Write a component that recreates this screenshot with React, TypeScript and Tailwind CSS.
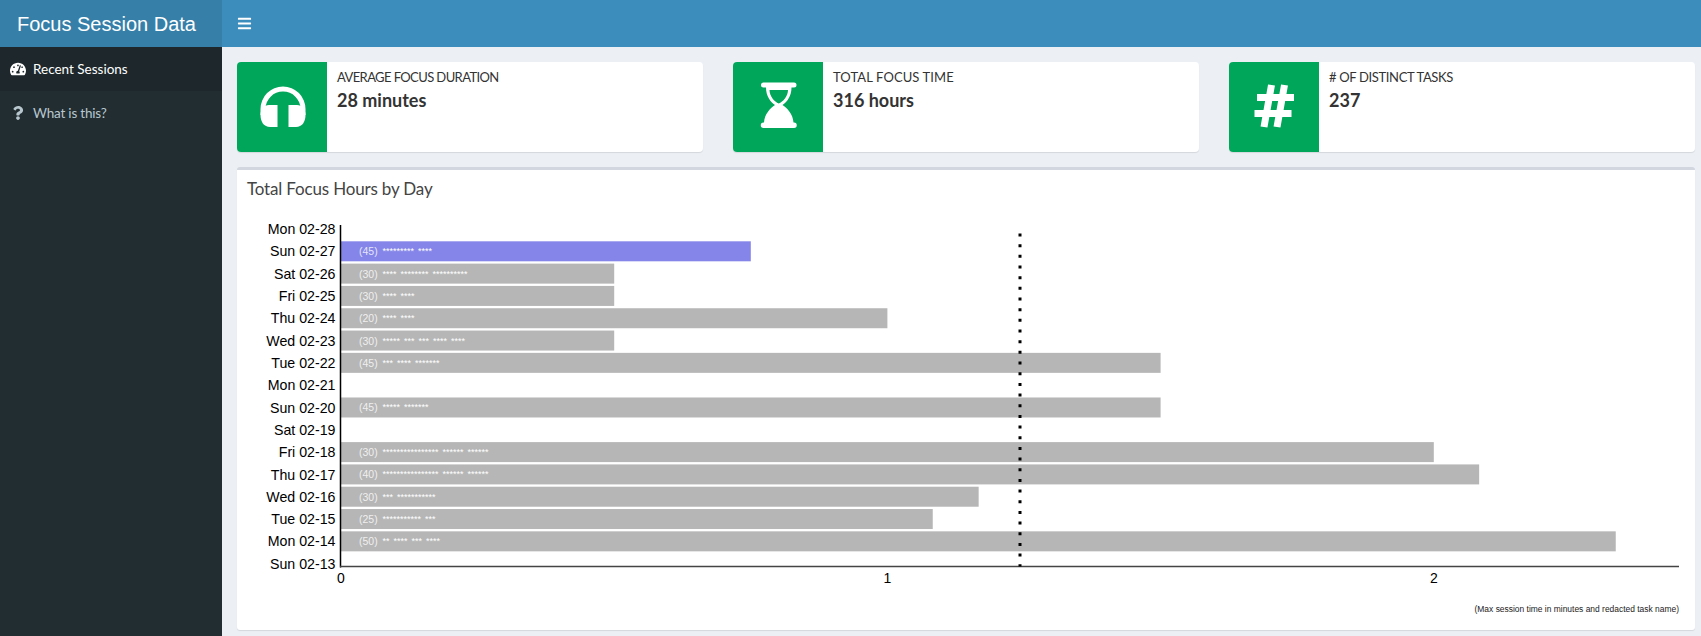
import React from 'react';
import { FaBars, FaQuestion, FaTachometerAlt } from 'react-icons/fa';

const HeadphonesIcon = () => (
  <svg viewBox="0 0 90 90" className="size-full" fill="white">
    <path d="M23.5 53V47A22.5 22.5 0 0 1 68.5 47V53H63.5V47A17.5 17.5 0 0 0 28.5 47V53Z" />
    <path d="M40.5 43V65H33C27 65 23.5 60 23.5 53C23.5 47 27 43 32 43Z" />
    <path d="M51.5 43V65H59C65 65 68.5 60 68.5 53C68.5 47 65 43 60 43Z" />
  </svg>
);

const HourglassIcon = () => (
  <svg viewBox="0 0 90 90" className="size-full" fill="white" fillRule="evenodd">
    <path d="M30.5 20.5H61a2.5 2.5 0 0 1 0 5H58.5C58.5 34 54 40 49.5 43C54 46 60 52 60.5 60.5H61a2.7 2.7 0 0 1 0 5.5H30.5a2.7 2.7 0 0 1 0-5.5H31C31.5 52 37.5 46 42 43C37.5 40 33 34 33 25.5H30.5a2.5 2.5 0 0 1 0-5ZM36.5 28H55C55 34 50 40 45.75 41.5C41.5 40 36.5 34 36.5 28Z" />
  </svg>
);

const HashIcon = () => (
  <svg viewBox="0 0 90 90" className="size-full" stroke="white" strokeWidth="7" fill="none">
    <path d="M42.5 23L35 65M55.5 23L48 65M28 35.5H65M25.5 51.5H62.5" />
  </svg>
);

const stats = [
  { label: 'Average Focus Duration', value: '28 minutes', icon: <HeadphonesIcon />, spacing: 'tracking-[-0.6px]' },
  { label: 'Total Focus Time', value: '316 hours', icon: <HourglassIcon />, spacing: 'tracking-[0.1px]' },
  { label: '# of Distinct Tasks', value: '237', icon: <HashIcon />, spacing: 'tracking-[-0.35px]' },
];

const days = [
  { day: 'Mon 02-28' },
  { day: 'Sun 02-27', hours: 0.75, max: 45, task: '********* ****' },
  { day: 'Sat 02-26', hours: 0.5, max: 30, task: '**** ******** **********' },
  { day: 'Fri 02-25', hours: 0.5, max: 30, task: '**** ****' },
  { day: 'Thu 02-24', hours: 1, max: 20, task: '**** ****' },
  { day: 'Wed 02-23', hours: 0.5, max: 30, task: '***** *** *** **** ****' },
  { day: 'Tue 02-22', hours: 1.5, max: 45, task: '*** **** *******' },
  { day: 'Mon 02-21' },
  { day: 'Sun 02-20', hours: 1.5, max: 45, task: '***** *******' },
  { day: 'Sat 02-19' },
  { day: 'Fri 02-18', hours: 2, max: 30, task: '**************** ****** ******' },
  { day: 'Thu 02-17', hours: 2.083, max: 40, task: '**************** ****** ******' },
  { day: 'Wed 02-16', hours: 1.167, max: 30, task: '*** ***********' },
  { day: 'Tue 02-15', hours: 1.083, max: 25, task: '*********** ***' },
  { day: 'Mon 02-14', hours: 2.333, max: 50, task: '** **** *** ****' },
  { day: 'Sun 02-13' },
];

// svg starts at page (237, 210)
const axisX = 104;
const axisY = 356.5;
const hourWidth = 546.4;
const rowY = (i: number) => 19 + i * 22.31;

const FocusChart = () => (
  <svg width="1458" height="420" className="block font-['Liberation_Sans',Arial,sans-serif]">
    {days.map((d, i) => (
      <g key={d.day}>
        <text x={axisX - 5.5} y={rowY(i) + 5.1} textAnchor="end" fontSize="14.2" fill="#000">
          {d.day}
        </text>
        {d.hours && (
          <>
            <rect
              x={axisX}
              y={rowY(i) - 10}
              width={d.hours * hourWidth}
              height="20"
              fill={i === 1 ? '#8585e9' : '#b6b6b6'}
            />
            <text x={axisX + 18} y={rowY(i) + 4} fontSize="10.5" fill="#fff" fillOpacity="0.8">
              ({d.max})
            </text>
            <text x={axisX + 41.5} y={rowY(i) + 3} fontSize="9" wordSpacing="1.5" fill="#fff">
              {d.task}
            </text>
          </>
        )}
      </g>
    ))}
    <line x1={axisX - 0.5} y1="15" x2={axisX - 0.5} y2={axisY + 1} stroke="#000" strokeWidth="1.5" />
    <line x1={axisX - 1} y1={axisY} x2="1442" y2={axisY} stroke="#444" strokeWidth="1.5" />
    <line
      x1="783"
      y1="23.5"
      x2="783"
      y2={axisY}
      stroke="#000"
      strokeWidth="3"
      strokeDasharray="3 7.67"
    />
    {[0, 1, 2].map((t) => (
      <text key={t} x={axisX + t * hourWidth} y="373" textAnchor="middle" fontSize="14" fill="#000">
        {t}
      </text>
    ))}
    <text x="1442" y="402" textAnchor="end" fontSize="8.45" fill="#222">
      (Max session time in minutes and redacted task name)
    </text>
  </svg>
);

const App: React.FC = () => {
  return (
    <div className="flex flex-col h-[636px] overflow-hidden bg-[#ecf0f5] font-['Lato',sans-serif] text-[#333]">
      <header className="flex h-[47px] shrink-0 bg-[#3c8dbc] text-white">
        <div className="w-[222px] pl-[17px] flex items-center bg-[#367fa9] font-['Liberation_Sans',Arial,sans-serif] text-[20px]">
          Focus Session Data
        </div>
        <div className="pl-[15px] flex items-center">
          <FaBars className="w-[15px] h-[15px]" />
        </div>
      </header>

      <div className="flex flex-1 min-h-0">
        <aside className="w-[222px] shrink-0 bg-[#222d32] text-[13.5px]">
          <div className="flex items-center h-11 bg-[#1e282c] text-white pl-[10px]">
            <FaTachometerAlt className="w-4 h-4" />
            <span className="ml-[7px]">Recent Sessions</span>
          </div>
          <div className="flex items-center h-11 text-[#b8c7ce] pl-[10px]">
            <span className="w-4 flex justify-center">
              <FaQuestion className="w-[14px] h-[14px]" />
            </span>
            <span className="ml-[7px] tracking-[-0.2px]">What is this?</span>
          </div>
        </aside>

        <main className="flex-1 min-w-0 pt-[15px] pl-[15px] pr-[6px]">
          <div className="grid grid-cols-3 gap-[30px]">
            {stats.map((s) => (
              <div key={s.label} className="flex h-[90px] bg-white rounded-sm shadow-[0_1px_1px_rgba(0,0,0,0.1)]">
                <div className="w-[90px] shrink-0 bg-[#00a65a] rounded-l-sm">{s.icon}</div>
                <div className="pl-[10px] pt-[5px]">
                  <div className={`text-[13px] uppercase leading-5 ${s.spacing}`}>{s.label}</div>
                  <div className="text-lg font-bold leading-[26px]">{s.value}</div>
                </div>
              </div>
            ))}
          </div>

          <section className="mt-[15px] h-[463px] bg-white rounded-[3px] border-t-[3px] border-[#d2d6de] shadow-[0_1px_1px_rgba(0,0,0,0.1)]">
            <h3 className="h-10 pl-[10px] pt-[9px] text-[17px] leading-5 tracking-[-0.17px] text-[#444]">
              Total Focus Hours by Day
            </h3>
            <FocusChart />
          </section>
        </main>
      </div>
    </div>
  );
};

export default App;
